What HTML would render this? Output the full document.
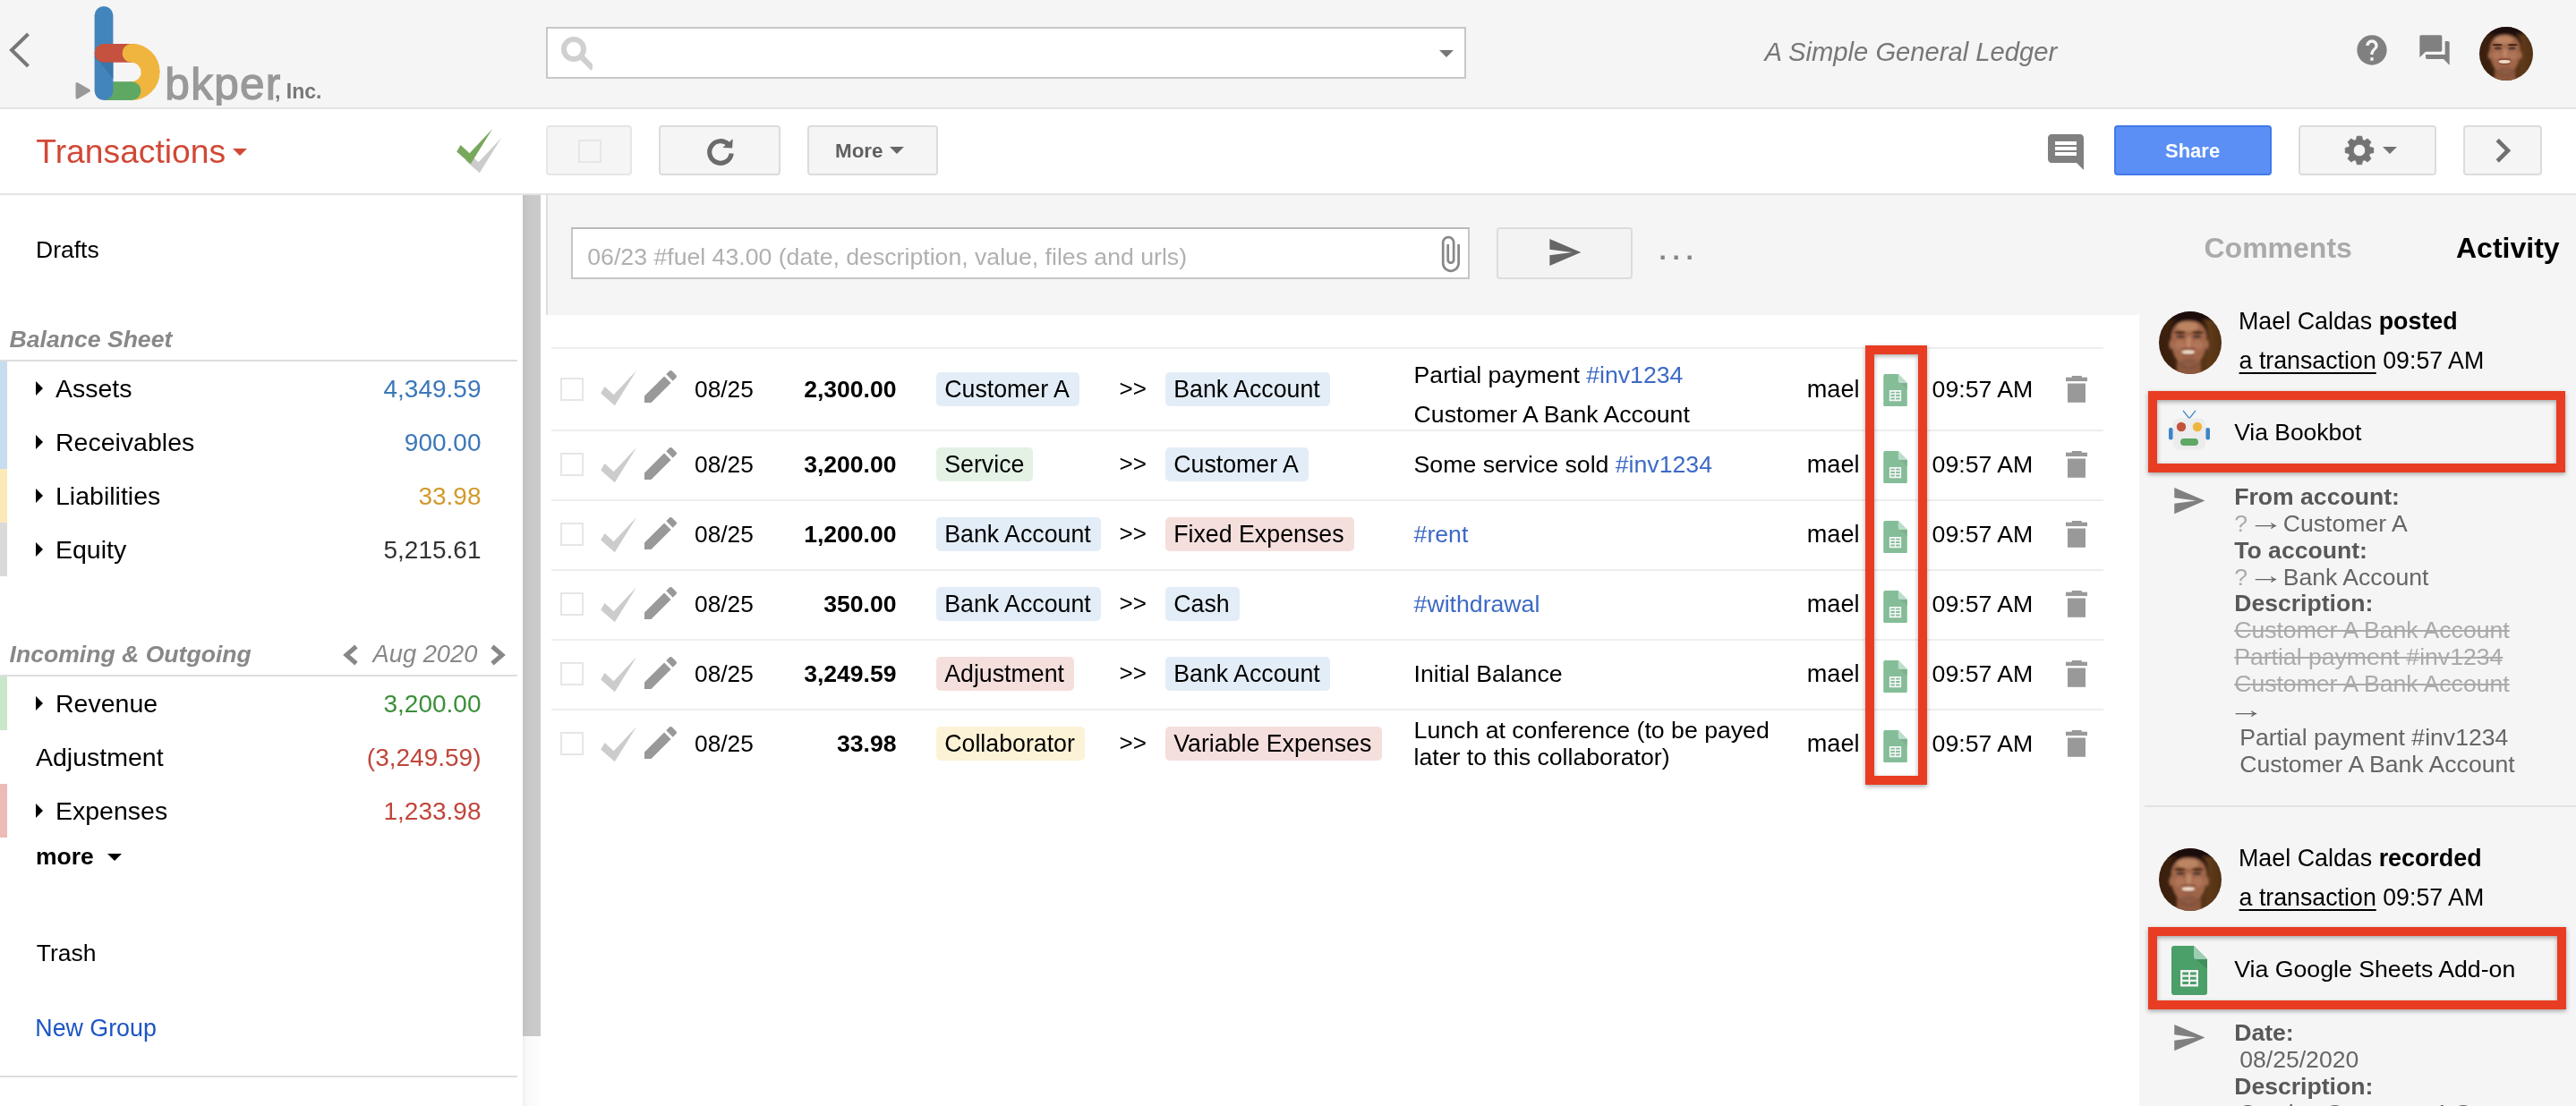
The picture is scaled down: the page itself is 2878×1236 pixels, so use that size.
<!DOCTYPE html>
<html lang="en"><head><meta charset="utf-8"><title>bkper - A Simple General Ledger</title>
<style>
html,body{margin:0;padding:0}
body{width:2878px;height:1236px;overflow:hidden;position:relative;background:#fff;color:#000;
font-family:"Liberation Sans",Arial,Helvetica,sans-serif;font-size:26px}
b{font-weight:700}
.abs{position:absolute}
.btn{position:absolute;box-sizing:border-box;border:2px solid #dcdcdc;border-radius:4px;background:#f5f5f5}
.badge{position:absolute;height:38px;border-radius:5px;font-size:26.75px;line-height:39px;padding:0 11.3px 0 9.2px;white-space:pre}
.tag{color:#3d69c6}
.rowline{position:absolute;left:616px;width:1734px;height:2px;background:#eeeeee}
.anno{position:absolute;box-sizing:border-box;border:10px solid #e83d22;filter:drop-shadow(0 2.5px 2.5px rgba(0,0,0,.33))}
.st{color:#aaa;text-decoration:line-through}
#app{position:absolute;left:0;top:0;width:2878px;height:1236px;overflow:hidden;will-change:transform}
</style></head><body><div id="app">

<div style="position:absolute;left:0px;top:0px;width:2878px;height:120px;background:#f5f5f5"></div>
<div style="position:absolute;left:0px;top:120px;width:2878px;height:2px;background:#e4e4e4"></div>
<div style="position:absolute;left:0px;top:216px;width:2878px;height:2px;background:#e4e4e4"></div>
<div style="position:absolute;left:610px;top:218px;width:2268px;height:1018px;background:#f5f5f5"></div>
<div style="position:absolute;left:610px;top:218px;width:2px;height:134px;background:#dedede"></div>
<div style="position:absolute;left:610px;top:352px;width:1780px;height:884px;background:#fff"></div>
<div style="position:absolute;left:584px;top:218px;width:20px;height:1018px;background:linear-gradient(90deg,#f1f1f1,#fafafa 30%,#fdfdfd)"></div>
<div style="position:absolute;left:584px;top:218px;width:20px;height:940px;background:linear-gradient(90deg,#c2c2c2,#c9c9c9 40%,#cbcbcb)"></div>
<div style="position:absolute;left:604px;top:218px;width:6px;height:1018px;background:#fff"></div>
<header>
<svg style="position:absolute;left:6px;top:30px;" width="36" height="52" viewBox="0 0 36 52"><polyline points="25.5,8 7,26 25.5,44" fill="none" stroke="#777" stroke-width="4"/></svg>
<svg style="position:absolute;left:0px;top:0px;" width="200" height="120" viewBox="0 0 200 120">
<path d="M147 59.4A21.1 21.1 0 0 1 147 101.6" stroke="#f0b53e" stroke-width="20.8" stroke-linecap="round" fill="none"/>
<path d="M116 101.6H147" stroke="#5ea864" stroke-width="20.8" stroke-linecap="butt" fill="none"/>
<circle cx="147" cy="101.6" r="10.4" fill="#5ea864"/>
<path d="M116 17.3V101.6" stroke="#4285bd" stroke-width="20.8" stroke-linecap="round" fill="none"/>
<path d="M105.6 62 126.4 88V66H106z" fill="#3a76aa"/>
<path d="M116 59.4H147" stroke="#c4523e" stroke-width="20.8" stroke-linecap="round" fill="none"/>
<path d="M147 59.4A21.1 21.1 0 0 1 168.1 80.5" stroke="#f0b53e" stroke-width="20.8" stroke-linecap="round" fill="none"/>
<path d="M86 93.5 99.5 101.3 86 109.1z" fill="#999" stroke="#999" stroke-width="3" stroke-linejoin="round"/>
</svg>
<div style="position:absolute;left:0;top:0;width:400px;height:117.6px;overflow:hidden"><div style="position:absolute;left:184.30px;top:63.75px;font-size:49.5px;line-height:59px;white-space:pre;color:#999;letter-spacing:1.3px;-webkit-text-stroke:1.3px #999">bkper</div></div>
<div style="position:absolute;left:307.00px;top:87.83px;font-size:23px;line-height:28px;white-space:pre;color:#777;font-weight:700">, Inc.</div>
<div style="position:absolute;left:610px;top:30px;width:1028px;height:58px;box-sizing:border-box;border:2px solid #c7c7c7;background:#fff"></div>
<svg style="position:absolute;left:624px;top:38px;" width="37.9" height="42" viewBox="0 0 37.9 42"><circle cx="17" cy="17" r="11" fill="none" stroke="#d0d0d0" stroke-width="6"/><path d="M25 25 38.5 38.5" stroke="#d0d0d0" stroke-width="6.5" stroke-linecap="butt"/></svg>
<svg style="position:absolute;left:1608px;top:56px;" width="16" height="8" viewBox="0 0 16 8"><path d="M0 0H16L8 8z" fill="#777"/></svg>
<div style="position:absolute;left:1971.60px;top:40.68px;font-size:29.2px;line-height:35px;white-space:pre;color:#777;font-style:italic">A Simple General Ledger</div>
<svg style="position:absolute;left:2630.0px;top:36.0px;" width="40" height="40" viewBox="0 0 24 24"><path fill="#808080" d="M12 2C6.48 2 2 6.48 2 12s4.48 10 10 10 10-4.48 10-10S17.52 2 12 2zm1 17h-2v-2h2v2zm2.07-7.75l-.9.92C13.45 12.9 13 13.5 13 15h-2v-.5c0-1.1.45-2.1 1.17-2.83l1.24-1.26c.37-.36.59-.86.59-1.41 0-1.1-.9-2-2-2s-2 .9-2 2H8c0-2.21 1.79-4 4-4s4 1.79 4 4c0 .88-.36 1.68-.93 2.25z"/></svg>
<svg style="position:absolute;left:2700.0px;top:35.5px;" width="40" height="40" viewBox="0 0 24 24"><path fill="#808080" d="M21 6h-2v9H6v2c0 .55.45 1 1 1h11l4 4V7c0-.55-.45-1-1-1zm-4 6V3c0-.55-.45-1-1-1H3c-.55 0-1 .45-1 1v14l4-4h10c.55 0 1-.45 1-1z"/></svg>
<svg style="position:absolute;left:2770px;top:30px;" width="60" height="60" viewBox="0 0 70 70"><defs><clipPath id="ca"><circle cx="35" cy="35" r="35"/></clipPath>
<filter id="ba" x="-30%" y="-30%" width="160%" height="160%"><feGaussianBlur stdDeviation="1.7"/></filter>
<filter id="sa" x="-30%" y="-30%" width="160%" height="160%"><feGaussianBlur stdDeviation="0.8"/></filter>
<linearGradient id="ga" x1="0" y1="0" x2="1" y2="0"><stop offset="0" stop-color="#3a1f0e"/><stop offset=".5" stop-color="#43250f"/><stop offset=".8" stop-color="#5e3a19"/><stop offset="1" stop-color="#523014"/></linearGradient></defs>
<g clip-path="url(#ca)"><rect width="70" height="70" fill="url(#ga)"/>
<g filter="url(#ba)">
<rect x="-5" y="-8" width="80" height="17" fill="#1c110a"/>
<ellipse cx="33.5" cy="80" rx="34" ry="14" fill="#96603f"/>
<rect x="20" y="52" width="27" height="22" fill="#8d583d"/>
<path d="M12.5 30C12.5 10 22 5 33.5 5C45 5 54.500 10 54.500 30C54.500 47 45 63 33.500 63C22 63 12.500 47 12.500 30Z" fill="#1a0f09"/>
<path d="M13.500 32C13.500 16 22 10.500 33.500 10.500C45 10.500 53.500 16 53.500 32C53.500 48 44.500 62.500 33.500 62.500C22.500 62.500 13.500 48 13.500 32Z" fill="#a1664a"/>
<ellipse cx="13.500" cy="37" rx="2" ry="5" fill="#a87152"/>
<ellipse cx="53.500" cy="37" rx="2" ry="5" fill="#a87152"/>
<ellipse cx="32" cy="17" rx="12" ry="5.500" fill="#bb8462"/>
<ellipse cx="23.500" cy="37.500" rx="6" ry="5.500" fill="#b1755a"/>
<ellipse cx="43.500" cy="37.500" rx="6" ry="5.500" fill="#b1755a"/>
<ellipse cx="33.500" cy="34.500" rx="3.200" ry="7" fill="#bf8666"/>
<ellipse cx="33.500" cy="56.500" rx="10" ry="4" fill="#8a5a42"/>
</g>
<g filter="url(#sa)">
<ellipse cx="24.300" cy="28" rx="4.600" ry="1.900" fill="#5d4136"/>
<ellipse cx="42.700" cy="28" rx="4.600" ry="1.900" fill="#5d4136"/>
<ellipse cx="23.500" cy="23.600" rx="6.500" ry="1.300" fill="#432719"/>
<ellipse cx="43.500" cy="23.600" rx="6.500" ry="1.300" fill="#432719"/>
<ellipse cx="32.800" cy="42.300" rx="9" ry="1.400" fill="#8b4f3c"/>
<ellipse cx="32.800" cy="48.300" rx="7" ry="1.200" fill="#8b4f3c"/>
<ellipse cx="32.800" cy="45.400" rx="7.400" ry="2.200" fill="#f0dfcc"/>
</g></g></svg>
</header>
<nav>
<div style="position:absolute;left:40.30px;top:147.39px;font-size:37.25px;line-height:45px;white-space:pre;color:#d14836">Transactions</div>
<svg style="position:absolute;left:260px;top:166px;" width="16" height="8" viewBox="0 0 16 8"><path d="M0 0H16L8 8z" fill="#d14836"/></svg>
<svg style="position:absolute;left:519.5px;top:154px;filter:blur(.4px)" width="41" height="40" viewBox="0 0 41 40"><polygon fill="#cccccc" points="0.2,25.4 4.6,18 14.6,27.2 40.2,0 15.8,39.3"/></svg>
<svg style="position:absolute;left:510px;top:144.2px;" width="41" height="40" viewBox="0 0 41 40"><polygon fill="#78a85c" points="0.2,25.4 4.6,18 14.6,27.2 40.2,0 15.8,39.3"/></svg>
<div class="btn" style="left:610px;top:140px;width:96px;height:56px;border-color:#e6e6e6"></div>
<div style="position:absolute;left:646px;top:156px;width:26px;height:26px;box-sizing:border-box;border:2px solid #e6e6e6;background:#f5f5f5"></div>
<div class="btn" style="left:736px;top:140px;width:136px;height:56px"></div>
<svg style="position:absolute;left:786.8px;top:151.8px;" width="36" height="36" viewBox="-18 -18 36 36"><path d="M12.21 1.50A12.3 12.3 0 1 1 8.85 -8.54" fill="none" stroke="#6b6b6b" stroke-width="5.2"/><path d="M2.3 -5 13.7 -14.8 13.1 -4.4z" fill="#6b6b6b"/></svg>
<div class="btn" style="left:902px;top:140px;width:146px;height:56px"></div>
<div style="position:absolute;left:933.00px;top:155.44px;font-size:22.4px;line-height:27px;white-space:pre;color:#606060;font-weight:700">More</div>
<svg style="position:absolute;left:994px;top:164px;" width="16" height="8" viewBox="0 0 16 8"><path d="M0 0H16L8 8z" fill="#666"/></svg>
<svg style="position:absolute;left:2284.0px;top:146.0px;" width="48" height="48" viewBox="0 0 24 24"><path fill="#808080" d="M21.99 4c0-1.1-.89-2-1.99-2H4c-1.1 0-2 .9-2 2v12c0 1.1.9 2 2 2h14l4 4-.01-18zM18 14H6v-2h12v2zm0-3H6V9h12v2zm0-3H6V6h12v2z"/></svg>
<div class="btn" style="left:2362px;top:140px;width:176px;height:56px;background:#5b8ff6;border-color:#4279e8;border-radius:4px"></div>
<div style="position:absolute;left:2419.00px;top:156.28px;font-size:22px;line-height:26px;white-space:pre;color:#fff;font-weight:700">Share</div>
<div class="btn" style="left:2568px;top:140px;width:154px;height:56px"></div>
<svg style="position:absolute;left:2618px;top:150px;" width="36" height="36" viewBox="-18 -18 36 36"><path fill="#737373" fill-rule="evenodd" stroke="#737373" stroke-width=".8" stroke-linejoin="round" d="M-3.50 -11.79L-2.70 -15.77L2.70 -15.77L3.50 -11.79A12.3 12.3 0 0 1 5.86 -10.81L9.24 -13.06L13.06 -9.24L10.81 -5.86A12.3 12.3 0 0 1 11.79 -3.50L15.77 -2.70L15.77 2.70L11.79 3.50A12.3 12.3 0 0 1 10.81 5.86L13.06 9.24L9.24 13.06L5.86 10.81A12.3 12.3 0 0 1 3.50 11.79L2.70 15.77L-2.70 15.77L-3.50 11.79A12.3 12.3 0 0 1 -5.86 10.81L-9.24 13.06L-13.06 9.24L-10.81 5.86A12.3 12.3 0 0 1 -11.79 3.50L-15.77 2.70L-15.77 -2.70L-11.79 -3.50A12.3 12.3 0 0 1 -10.81 -5.86L-13.06 -9.24L-9.24 -13.06L-5.86 -10.81A12.3 12.3 0 0 1 -3.50 -11.79ZM6.7 0A6.7 6.7 0 1 0 -6.7 0A6.7 6.7 0 1 0 6.7 0Z"/></svg>
<svg style="position:absolute;left:2662px;top:164px;" width="16" height="8" viewBox="0 0 16 8"><path d="M0 0H16L8 8z" fill="#737373"/></svg>
<div class="btn" style="left:2752px;top:140px;width:88px;height:56px"></div>
<svg style="position:absolute;left:2780px;top:150px;" width="36" height="36" viewBox="0 0 36 36"><polyline points="10.2,6.5 22,18.2 10.2,30" fill="none" stroke="#707070" stroke-width="4.6"/></svg>
</nav>
<aside>
<div style="position:absolute;left:40.00px;top:263.02px;font-size:26.5px;line-height:32px;white-space:pre;">Drafts</div>
<div style="position:absolute;left:10.50px;top:362.78px;font-size:26.6px;line-height:32px;white-space:pre;color:#888;font-weight:700;font-style:italic">Balance Sheet</div>
<div style="position:absolute;left:0px;top:402px;width:578px;height:2px;background:#dddddd"></div>
<div style="position:absolute;left:0px;top:404px;width:8px;height:60px;background:#c6dcef"></div>
<svg style="position:absolute;left:40px;top:426px;" width="8" height="16" viewBox="0 0 8 16"><path d="M0 0 8 8 0 16z" fill="#000"/></svg>
<div style="position:absolute;left:62.00px;top:417.42px;font-size:28.5px;line-height:34px;white-space:pre;">Assets</div>
<div style="position:absolute;right:2340.50px;top:417.60px;font-size:28px;line-height:34px;white-space:pre;text-align:right;color:#3b77b9">4,349.59</div>
<div style="position:absolute;left:0px;top:464px;width:8px;height:60px;background:#c6dcef"></div>
<svg style="position:absolute;left:40px;top:486px;" width="8" height="16" viewBox="0 0 8 16"><path d="M0 0 8 8 0 16z" fill="#000"/></svg>
<div style="position:absolute;left:62.00px;top:477.42px;font-size:28.5px;line-height:34px;white-space:pre;">Receivables</div>
<div style="position:absolute;right:2340.50px;top:477.60px;font-size:28px;line-height:34px;white-space:pre;text-align:right;color:#3b77b9">900.00</div>
<div style="position:absolute;left:0px;top:524px;width:8px;height:60px;background:#fbe9b8"></div>
<svg style="position:absolute;left:40px;top:546px;" width="8" height="16" viewBox="0 0 8 16"><path d="M0 0 8 8 0 16z" fill="#000"/></svg>
<div style="position:absolute;left:62.00px;top:537.42px;font-size:28.5px;line-height:34px;white-space:pre;">Liabilities</div>
<div style="position:absolute;right:2340.50px;top:537.60px;font-size:28px;line-height:34px;white-space:pre;text-align:right;color:#d29a2b">33.98</div>
<div style="position:absolute;left:0px;top:584px;width:8px;height:60px;background:#d9d9d9"></div>
<svg style="position:absolute;left:40px;top:606px;" width="8" height="16" viewBox="0 0 8 16"><path d="M0 0 8 8 0 16z" fill="#000"/></svg>
<div style="position:absolute;left:62.00px;top:597.42px;font-size:28.5px;line-height:34px;white-space:pre;">Equity</div>
<div style="position:absolute;right:2340.50px;top:597.60px;font-size:28px;line-height:34px;white-space:pre;text-align:right;color:#333">5,215.61</div>
<div style="position:absolute;left:0px;top:756px;width:8px;height:60px;background:#c9e6cb"></div>
<svg style="position:absolute;left:40px;top:778px;" width="8" height="16" viewBox="0 0 8 16"><path d="M0 0 8 8 0 16z" fill="#000"/></svg>
<div style="position:absolute;left:62.00px;top:769.42px;font-size:28.5px;line-height:34px;white-space:pre;">Revenue</div>
<div style="position:absolute;right:2340.50px;top:769.60px;font-size:28px;line-height:34px;white-space:pre;text-align:right;color:#3b8e3b">3,200.00</div>
<div style="position:absolute;left:40.00px;top:829.42px;font-size:28.5px;line-height:34px;white-space:pre;">Adjustment</div>
<div style="position:absolute;right:2340.50px;top:829.60px;font-size:28px;line-height:34px;white-space:pre;text-align:right;color:#c0463a">(3,249.59)</div>
<div style="position:absolute;left:0px;top:876px;width:8px;height:60px;background:#edbab6"></div>
<svg style="position:absolute;left:40px;top:898px;" width="8" height="16" viewBox="0 0 8 16"><path d="M0 0 8 8 0 16z" fill="#000"/></svg>
<div style="position:absolute;left:62.00px;top:889.42px;font-size:28.5px;line-height:34px;white-space:pre;">Expenses</div>
<div style="position:absolute;right:2340.50px;top:889.60px;font-size:28px;line-height:34px;white-space:pre;text-align:right;color:#c0463a">1,233.98</div>
<div style="position:absolute;left:10.50px;top:714.78px;font-size:26.6px;line-height:32px;white-space:pre;color:#888;font-weight:700;font-style:italic">Incoming &amp; Outgoing</div>
<svg style="position:absolute;left:382px;top:720px;" width="20" height="24" viewBox="0 0 20 24"><polyline points="16,2.5 5,12 16,21.5" fill="none" stroke="#888" stroke-width="5"/></svg>
<div style="position:absolute;left:416.50px;top:714.34px;font-size:27.3px;line-height:33px;white-space:pre;color:#888;font-style:italic">Aug 2020</div>
<svg style="position:absolute;left:546px;top:720px;" width="20" height="24" viewBox="0 0 20 24"><polyline points="4,2.5 15,12 4,21.5" fill="none" stroke="#888" stroke-width="5"/></svg>
<div style="position:absolute;left:0px;top:754px;width:578px;height:2px;background:#dddddd"></div>
<div style="position:absolute;left:40.00px;top:940.82px;font-size:26.5px;line-height:32px;white-space:pre;font-weight:700">more</div>
<svg style="position:absolute;left:120px;top:954px;" width="16" height="8" viewBox="0 0 16 8"><path d="M0 0H16L8 8z" fill="#000"/></svg>
<div style="position:absolute;left:40.80px;top:1048.92px;font-size:26.5px;line-height:32px;white-space:pre;">Trash</div>
<div style="position:absolute;left:39.30px;top:1132.81px;font-size:26.8px;line-height:32px;white-space:pre;color:#1b55c4">New Group</div>
<div style="position:absolute;left:0px;top:1202px;width:578px;height:2px;background:#dddddd"></div>
</aside>
<main>
<div style="position:absolute;left:638px;top:254px;width:1004px;height:58px;box-sizing:border-box;border:2px solid #c6c6c6;border-top-color:#b9b9b9;background:#fff"></div>
<div style="position:absolute;left:656.30px;top:270.76px;font-size:26.67px;line-height:32px;white-space:pre;color:#b0b0b0">06/23 #fuel 43.00 (date, description, value, files and urls)</div>
<svg style="position:absolute;left:1597.8px;top:262.0px;" width="44" height="44" viewBox="0 0 24 24"><path fill="#888" d="M16.5 6v11.5c0 2.21-1.79 4-4 4s-4-1.79-4-4V5c0-1.38 1.12-2.5 2.5-2.5s2.5 1.12 2.5 2.5v10.5c0 .55-.45 1-1 1s-1-.45-1-1V6H10v9.5c0 1.38 1.12 2.5 2.5 2.5s2.5-1.12 2.5-2.5V5c0-2.21-1.79-4-4-4S7 2.79 7 5v12.5c0 3.04 2.46 5.5 5.5 5.5s5.5-2.46 5.5-5.5V6h-1.5z"/></svg>
<div class="btn" style="left:1672px;top:254px;width:152px;height:58px;background:#f3f3f3"></div>
<svg style="position:absolute;left:1728.3px;top:262.0px;" width="40" height="40" viewBox="0 0 24 24"><path fill="#666" d="M2.01 21L23 12 2.01 3 2 10l15 2-15 2z"/></svg>
<div style="position:absolute;left:1853.50px;top:262.41px;font-size:30px;line-height:36px;white-space:pre;color:#858585;font-weight:700;letter-spacing:6.65px">...</div>
<div class="rowline" style="top:388px"></div>
<div style="position:absolute;left:626px;top:421.75px;width:26px;height:26px;box-sizing:border-box;border:2px solid #e6e6e6;background:#fff"></div>
<svg style="position:absolute;left:670.5px;top:414.0px;" width="41" height="40" viewBox="0 0 41 40"><polygon fill="#cccccc" points="0.2,25.4 4.6,18 14.6,27.2 40.2,0 15.8,39.3"/></svg>
<svg style="position:absolute;left:714.0px;top:408.0px;" width="48" height="48" viewBox="0 0 24 24"><path fill="#999" d="M3 17.25V21h3.75L17.81 9.94l-3.75-3.75L3 17.25zM20.71 7.04c.39-.39.39-1.02 0-1.41l-2.34-2.34c-.39-.39-1.02-.39-1.41 0l-1.83 1.83 3.75 3.75 1.83-1.83z"/></svg>
<div style="position:absolute;left:776.00px;top:418.74px;font-size:26.3px;line-height:32px;white-space:pre;">08/25</div>
<div style="position:absolute;right:1876.50px;top:418.65px;font-size:26.55px;line-height:32px;white-space:pre;text-align:right;font-weight:700">2,300.00</div>
<div class="badge" style="left:1046px;top:416.0px;background:#e3edf7">Customer A</div>
<div style="position:absolute;left:1250.50px;top:419.34px;font-size:26px;line-height:31px;white-space:pre;">&gt;&gt;</div>
<div class="badge" style="left:1302px;top:416.0px;background:#e3edf7">Bank Account</div>
<div style="position:absolute;left:1579.60px;top:403.06px;font-size:26.67px;line-height:32px;white-space:pre;">Partial payment <span class="tag">#inv1234</span></div>
<div style="position:absolute;left:1579.60px;top:447.06px;font-size:26.67px;line-height:32px;white-space:pre;">Customer A Bank Account</div>
<div style="position:absolute;left:2018.80px;top:417.96px;font-size:27.1px;line-height:33px;white-space:pre;">mael</div>
<svg style="position:absolute;left:2104.2px;top:417.5px;opacity:.68" width="27" height="36.5" viewBox="0 0 40 55"><defs><linearGradient id="sg" x1="0" y1="0" x2="1" y2="1"><stop offset="0" stop-color="#52a46e"/><stop offset="1" stop-color="#449a62"/></linearGradient></defs><path fill="#4b9f68" d="M3 0H25L40 15V52a3 3 0 0 1-3 3H3a3 3 0 0 1-3-3V3a3 3 0 0 1 3-3z"/><path fill="#3d8857" opacity=".75" d="M26.5 14 40 26V15z"/><path fill="#9bceb1" d="M25 0 40 15H28a3 3 0 0 1-3-3z"/><path fill="#f3f3f3" fill-rule="evenodd" d="M10 27h20v18.6H10zM12.3 29.6v2.9h6.7v-2.9zM21 29.6v2.9h6.7v-2.9zM12.3 34.8v2.9h6.7v-2.9zM21 34.8v2.9h6.7v-2.9zM12.3 40v2.9h6.7v-2.9zM21 40v2.9h6.7v-2.9z"/></svg>
<div style="position:absolute;left:2158.60px;top:418.60px;font-size:26.7px;line-height:32px;white-space:pre;">09:57 AM</div>
<svg style="position:absolute;left:2308px;top:419.85px;" width="24.5" height="30" viewBox="0 0 24.5 30"><rect x="6.8" y="0" width="10.9" height="3" fill="#999"/><rect x="0" y="1.7" width="24" height="4.4" fill="#999"/><rect x="2" y="8.5" width="20" height="21.3" fill="#999"/></svg>
<div class="rowline" style="top:480px"></div>
<div style="position:absolute;left:626px;top:505.75px;width:26px;height:26px;box-sizing:border-box;border:2px solid #e6e6e6;background:#fff"></div>
<svg style="position:absolute;left:670.5px;top:500.0px;" width="41" height="40" viewBox="0 0 41 40"><polygon fill="#cccccc" points="0.2,25.4 4.6,18 14.6,27.2 40.2,0 15.8,39.3"/></svg>
<svg style="position:absolute;left:714.0px;top:494.0px;" width="48" height="48" viewBox="0 0 24 24"><path fill="#999" d="M3 17.25V21h3.75L17.81 9.94l-3.75-3.75L3 17.25zM20.71 7.04c.39-.39.39-1.02 0-1.41l-2.34-2.34c-.39-.39-1.02-.39-1.41 0l-1.83 1.83 3.75 3.75 1.83-1.83z"/></svg>
<div style="position:absolute;left:776.00px;top:502.74px;font-size:26.3px;line-height:32px;white-space:pre;">08/25</div>
<div style="position:absolute;right:1876.50px;top:502.65px;font-size:26.55px;line-height:32px;white-space:pre;text-align:right;font-weight:700">3,200.00</div>
<div class="badge" style="left:1046px;top:500.0px;background:#e3f2e5;padding-right:9.4px">Service</div>
<div style="position:absolute;left:1250.50px;top:503.34px;font-size:26px;line-height:31px;white-space:pre;">&gt;&gt;</div>
<div class="badge" style="left:1302px;top:500.0px;background:#e3edf7">Customer A</div>
<div style="position:absolute;left:1579.60px;top:502.61px;font-size:26.67px;line-height:32px;white-space:pre;">Some service sold <span class="tag">#inv1234</span></div>
<div style="position:absolute;left:2018.80px;top:501.96px;font-size:27.1px;line-height:33px;white-space:pre;">mael</div>
<svg style="position:absolute;left:2104.2px;top:503.7px;opacity:.68" width="27" height="36.5" viewBox="0 0 40 55"><defs><linearGradient id="sg" x1="0" y1="0" x2="1" y2="1"><stop offset="0" stop-color="#52a46e"/><stop offset="1" stop-color="#449a62"/></linearGradient></defs><path fill="#4b9f68" d="M3 0H25L40 15V52a3 3 0 0 1-3 3H3a3 3 0 0 1-3-3V3a3 3 0 0 1 3-3z"/><path fill="#3d8857" opacity=".75" d="M26.5 14 40 26V15z"/><path fill="#9bceb1" d="M25 0 40 15H28a3 3 0 0 1-3-3z"/><path fill="#f3f3f3" fill-rule="evenodd" d="M10 27h20v18.6H10zM12.3 29.6v2.9h6.7v-2.9zM21 29.6v2.9h6.7v-2.9zM12.3 34.8v2.9h6.7v-2.9zM21 34.8v2.9h6.7v-2.9zM12.3 40v2.9h6.7v-2.9zM21 40v2.9h6.7v-2.9z"/></svg>
<div style="position:absolute;left:2158.60px;top:502.60px;font-size:26.7px;line-height:32px;white-space:pre;">09:57 AM</div>
<svg style="position:absolute;left:2308px;top:503.85px;" width="24.5" height="30" viewBox="0 0 24.5 30"><rect x="6.8" y="0" width="10.9" height="3" fill="#999"/><rect x="0" y="1.7" width="24" height="4.4" fill="#999"/><rect x="2" y="8.5" width="20" height="21.3" fill="#999"/></svg>
<div class="rowline" style="top:558px"></div>
<div style="position:absolute;left:626px;top:583.75px;width:26px;height:26px;box-sizing:border-box;border:2px solid #e6e6e6;background:#fff"></div>
<svg style="position:absolute;left:670.5px;top:578.0px;" width="41" height="40" viewBox="0 0 41 40"><polygon fill="#cccccc" points="0.2,25.4 4.6,18 14.6,27.2 40.2,0 15.8,39.3"/></svg>
<svg style="position:absolute;left:714.0px;top:572.0px;" width="48" height="48" viewBox="0 0 24 24"><path fill="#999" d="M3 17.25V21h3.75L17.81 9.94l-3.75-3.75L3 17.25zM20.71 7.04c.39-.39.39-1.02 0-1.41l-2.34-2.34c-.39-.39-1.02-.39-1.41 0l-1.83 1.83 3.75 3.75 1.83-1.83z"/></svg>
<div style="position:absolute;left:776.00px;top:580.74px;font-size:26.3px;line-height:32px;white-space:pre;">08/25</div>
<div style="position:absolute;right:1876.50px;top:580.65px;font-size:26.55px;line-height:32px;white-space:pre;text-align:right;font-weight:700">1,200.00</div>
<div class="badge" style="left:1046px;top:578.0px;background:#e3edf7">Bank Account</div>
<div style="position:absolute;left:1250.50px;top:581.34px;font-size:26px;line-height:31px;white-space:pre;">&gt;&gt;</div>
<div class="badge" style="left:1302px;top:578.0px;background:#f5dfdd">Fixed Expenses</div>
<div style="position:absolute;left:1579.60px;top:580.61px;font-size:26.67px;line-height:32px;white-space:pre;"><span class="tag">#rent</span></div>
<div style="position:absolute;left:2018.80px;top:579.96px;font-size:27.1px;line-height:33px;white-space:pre;">mael</div>
<svg style="position:absolute;left:2104.2px;top:581.7px;opacity:.68" width="27" height="36.5" viewBox="0 0 40 55"><defs><linearGradient id="sg" x1="0" y1="0" x2="1" y2="1"><stop offset="0" stop-color="#52a46e"/><stop offset="1" stop-color="#449a62"/></linearGradient></defs><path fill="#4b9f68" d="M3 0H25L40 15V52a3 3 0 0 1-3 3H3a3 3 0 0 1-3-3V3a3 3 0 0 1 3-3z"/><path fill="#3d8857" opacity=".75" d="M26.5 14 40 26V15z"/><path fill="#9bceb1" d="M25 0 40 15H28a3 3 0 0 1-3-3z"/><path fill="#f3f3f3" fill-rule="evenodd" d="M10 27h20v18.6H10zM12.3 29.6v2.9h6.7v-2.9zM21 29.6v2.9h6.7v-2.9zM12.3 34.8v2.9h6.7v-2.9zM21 34.8v2.9h6.7v-2.9zM12.3 40v2.9h6.7v-2.9zM21 40v2.9h6.7v-2.9z"/></svg>
<div style="position:absolute;left:2158.60px;top:580.60px;font-size:26.7px;line-height:32px;white-space:pre;">09:57 AM</div>
<svg style="position:absolute;left:2308px;top:581.85px;" width="24.5" height="30" viewBox="0 0 24.5 30"><rect x="6.8" y="0" width="10.9" height="3" fill="#999"/><rect x="0" y="1.7" width="24" height="4.4" fill="#999"/><rect x="2" y="8.5" width="20" height="21.3" fill="#999"/></svg>
<div class="rowline" style="top:636px"></div>
<div style="position:absolute;left:626px;top:661.75px;width:26px;height:26px;box-sizing:border-box;border:2px solid #e6e6e6;background:#fff"></div>
<svg style="position:absolute;left:670.5px;top:656.0px;" width="41" height="40" viewBox="0 0 41 40"><polygon fill="#cccccc" points="0.2,25.4 4.6,18 14.6,27.2 40.2,0 15.8,39.3"/></svg>
<svg style="position:absolute;left:714.0px;top:650.0px;" width="48" height="48" viewBox="0 0 24 24"><path fill="#999" d="M3 17.25V21h3.75L17.81 9.94l-3.75-3.75L3 17.25zM20.71 7.04c.39-.39.39-1.02 0-1.41l-2.34-2.34c-.39-.39-1.02-.39-1.41 0l-1.83 1.83 3.75 3.75 1.83-1.83z"/></svg>
<div style="position:absolute;left:776.00px;top:658.74px;font-size:26.3px;line-height:32px;white-space:pre;">08/25</div>
<div style="position:absolute;right:1876.50px;top:658.65px;font-size:26.55px;line-height:32px;white-space:pre;text-align:right;font-weight:700">350.00</div>
<div class="badge" style="left:1046px;top:656.0px;background:#e3edf7">Bank Account</div>
<div style="position:absolute;left:1250.50px;top:659.34px;font-size:26px;line-height:31px;white-space:pre;">&gt;&gt;</div>
<div class="badge" style="left:1302px;top:656.0px;background:#e3edf7">Cash</div>
<div style="position:absolute;left:1579.60px;top:658.61px;font-size:26.67px;line-height:32px;white-space:pre;"><span class="tag">#withdrawal</span></div>
<div style="position:absolute;left:2018.80px;top:657.96px;font-size:27.1px;line-height:33px;white-space:pre;">mael</div>
<svg style="position:absolute;left:2104.2px;top:659.7px;opacity:.68" width="27" height="36.5" viewBox="0 0 40 55"><defs><linearGradient id="sg" x1="0" y1="0" x2="1" y2="1"><stop offset="0" stop-color="#52a46e"/><stop offset="1" stop-color="#449a62"/></linearGradient></defs><path fill="#4b9f68" d="M3 0H25L40 15V52a3 3 0 0 1-3 3H3a3 3 0 0 1-3-3V3a3 3 0 0 1 3-3z"/><path fill="#3d8857" opacity=".75" d="M26.5 14 40 26V15z"/><path fill="#9bceb1" d="M25 0 40 15H28a3 3 0 0 1-3-3z"/><path fill="#f3f3f3" fill-rule="evenodd" d="M10 27h20v18.6H10zM12.3 29.6v2.9h6.7v-2.9zM21 29.6v2.9h6.7v-2.9zM12.3 34.8v2.9h6.7v-2.9zM21 34.8v2.9h6.7v-2.9zM12.3 40v2.9h6.7v-2.9zM21 40v2.9h6.7v-2.9z"/></svg>
<div style="position:absolute;left:2158.60px;top:658.60px;font-size:26.7px;line-height:32px;white-space:pre;">09:57 AM</div>
<svg style="position:absolute;left:2308px;top:659.85px;" width="24.5" height="30" viewBox="0 0 24.5 30"><rect x="6.8" y="0" width="10.9" height="3" fill="#999"/><rect x="0" y="1.7" width="24" height="4.4" fill="#999"/><rect x="2" y="8.5" width="20" height="21.3" fill="#999"/></svg>
<div class="rowline" style="top:714px"></div>
<div style="position:absolute;left:626px;top:739.75px;width:26px;height:26px;box-sizing:border-box;border:2px solid #e6e6e6;background:#fff"></div>
<svg style="position:absolute;left:670.5px;top:734.0px;" width="41" height="40" viewBox="0 0 41 40"><polygon fill="#cccccc" points="0.2,25.4 4.6,18 14.6,27.2 40.2,0 15.8,39.3"/></svg>
<svg style="position:absolute;left:714.0px;top:728.0px;" width="48" height="48" viewBox="0 0 24 24"><path fill="#999" d="M3 17.25V21h3.75L17.81 9.94l-3.75-3.75L3 17.25zM20.71 7.04c.39-.39.39-1.02 0-1.41l-2.34-2.34c-.39-.39-1.02-.39-1.41 0l-1.83 1.83 3.75 3.75 1.83-1.83z"/></svg>
<div style="position:absolute;left:776.00px;top:736.74px;font-size:26.3px;line-height:32px;white-space:pre;">08/25</div>
<div style="position:absolute;right:1876.50px;top:736.65px;font-size:26.55px;line-height:32px;white-space:pre;text-align:right;font-weight:700">3,249.59</div>
<div class="badge" style="left:1046px;top:734.0px;background:#f5dfdd">Adjustment</div>
<div style="position:absolute;left:1250.50px;top:737.34px;font-size:26px;line-height:31px;white-space:pre;">&gt;&gt;</div>
<div class="badge" style="left:1302px;top:734.0px;background:#e3edf7">Bank Account</div>
<div style="position:absolute;left:1579.60px;top:736.61px;font-size:26.67px;line-height:32px;white-space:pre;">Initial Balance</div>
<div style="position:absolute;left:2018.80px;top:735.96px;font-size:27.1px;line-height:33px;white-space:pre;">mael</div>
<svg style="position:absolute;left:2104.2px;top:737.7px;opacity:.68" width="27" height="36.5" viewBox="0 0 40 55"><defs><linearGradient id="sg" x1="0" y1="0" x2="1" y2="1"><stop offset="0" stop-color="#52a46e"/><stop offset="1" stop-color="#449a62"/></linearGradient></defs><path fill="#4b9f68" d="M3 0H25L40 15V52a3 3 0 0 1-3 3H3a3 3 0 0 1-3-3V3a3 3 0 0 1 3-3z"/><path fill="#3d8857" opacity=".75" d="M26.5 14 40 26V15z"/><path fill="#9bceb1" d="M25 0 40 15H28a3 3 0 0 1-3-3z"/><path fill="#f3f3f3" fill-rule="evenodd" d="M10 27h20v18.6H10zM12.3 29.6v2.9h6.7v-2.9zM21 29.6v2.9h6.7v-2.9zM12.3 34.8v2.9h6.7v-2.9zM21 34.8v2.9h6.7v-2.9zM12.3 40v2.9h6.7v-2.9zM21 40v2.9h6.7v-2.9z"/></svg>
<div style="position:absolute;left:2158.60px;top:736.60px;font-size:26.7px;line-height:32px;white-space:pre;">09:57 AM</div>
<svg style="position:absolute;left:2308px;top:737.85px;" width="24.5" height="30" viewBox="0 0 24.5 30"><rect x="6.8" y="0" width="10.9" height="3" fill="#999"/><rect x="0" y="1.7" width="24" height="4.4" fill="#999"/><rect x="2" y="8.5" width="20" height="21.3" fill="#999"/></svg>
<div class="rowline" style="top:792px"></div>
<div style="position:absolute;left:626px;top:817.75px;width:26px;height:26px;box-sizing:border-box;border:2px solid #e6e6e6;background:#fff"></div>
<svg style="position:absolute;left:670.5px;top:812.0px;" width="41" height="40" viewBox="0 0 41 40"><polygon fill="#cccccc" points="0.2,25.4 4.6,18 14.6,27.2 40.2,0 15.8,39.3"/></svg>
<svg style="position:absolute;left:714.0px;top:806.0px;" width="48" height="48" viewBox="0 0 24 24"><path fill="#999" d="M3 17.25V21h3.75L17.81 9.94l-3.75-3.75L3 17.25zM20.71 7.04c.39-.39.39-1.02 0-1.41l-2.34-2.34c-.39-.39-1.02-.39-1.41 0l-1.83 1.83 3.75 3.75 1.83-1.83z"/></svg>
<div style="position:absolute;left:776.00px;top:814.74px;font-size:26.3px;line-height:32px;white-space:pre;">08/25</div>
<div style="position:absolute;right:1876.50px;top:814.65px;font-size:26.55px;line-height:32px;white-space:pre;text-align:right;font-weight:700">33.98</div>
<div class="badge" style="left:1046px;top:812.0px;background:#fcf2d6">Collaborator</div>
<div style="position:absolute;left:1250.50px;top:815.34px;font-size:26px;line-height:31px;white-space:pre;">&gt;&gt;</div>
<div class="badge" style="left:1302px;top:812.0px;background:#f5dfdd">Variable Expenses</div>
<div style="position:absolute;left:1579.60px;top:800.21px;font-size:26.67px;line-height:32px;white-space:pre;">Lunch at conference (to be payed</div>
<div style="position:absolute;left:1579.60px;top:830.21px;font-size:26.67px;line-height:32px;white-space:pre;">later to this collaborator)</div>
<div style="position:absolute;left:2018.80px;top:813.96px;font-size:27.1px;line-height:33px;white-space:pre;">mael</div>
<svg style="position:absolute;left:2104.2px;top:815.7px;opacity:.68" width="27" height="36.5" viewBox="0 0 40 55"><defs><linearGradient id="sg" x1="0" y1="0" x2="1" y2="1"><stop offset="0" stop-color="#52a46e"/><stop offset="1" stop-color="#449a62"/></linearGradient></defs><path fill="#4b9f68" d="M3 0H25L40 15V52a3 3 0 0 1-3 3H3a3 3 0 0 1-3-3V3a3 3 0 0 1 3-3z"/><path fill="#3d8857" opacity=".75" d="M26.5 14 40 26V15z"/><path fill="#9bceb1" d="M25 0 40 15H28a3 3 0 0 1-3-3z"/><path fill="#f3f3f3" fill-rule="evenodd" d="M10 27h20v18.6H10zM12.3 29.6v2.9h6.7v-2.9zM21 29.6v2.9h6.7v-2.9zM12.3 34.8v2.9h6.7v-2.9zM21 34.8v2.9h6.7v-2.9zM12.3 40v2.9h6.7v-2.9zM21 40v2.9h6.7v-2.9z"/></svg>
<div style="position:absolute;left:2158.60px;top:814.60px;font-size:26.7px;line-height:32px;white-space:pre;">09:57 AM</div>
<svg style="position:absolute;left:2308px;top:815.85px;" width="24.5" height="30" viewBox="0 0 24.5 30"><rect x="6.8" y="0" width="10.9" height="3" fill="#999"/><rect x="0" y="1.7" width="24" height="4.4" fill="#999"/><rect x="2" y="8.5" width="20" height="21.3" fill="#999"/></svg>
<div class="anno" style="left:2084px;top:386px;width:69px;height:491px"></div>
</main>
<section>
<div style="position:absolute;left:2462.50px;top:257.91px;font-size:32px;line-height:38px;white-space:pre;color:#aaa;font-weight:700">Comments</div>
<div style="position:absolute;left:2744.00px;top:257.91px;font-size:32px;line-height:38px;white-space:pre;font-weight:700">Activity</div>
<svg style="position:absolute;left:2412px;top:348px;" width="70" height="70" viewBox="0 0 70 70"><defs><clipPath id="cb"><circle cx="35" cy="35" r="35"/></clipPath>
<filter id="bb" x="-30%" y="-30%" width="160%" height="160%"><feGaussianBlur stdDeviation="1.7"/></filter>
<filter id="sb" x="-30%" y="-30%" width="160%" height="160%"><feGaussianBlur stdDeviation="0.8"/></filter>
<linearGradient id="gb" x1="0" y1="0" x2="1" y2="0"><stop offset="0" stop-color="#3a1f0e"/><stop offset=".5" stop-color="#43250f"/><stop offset=".8" stop-color="#5e3a19"/><stop offset="1" stop-color="#523014"/></linearGradient></defs>
<g clip-path="url(#cb)"><rect width="70" height="70" fill="url(#gb)"/>
<g filter="url(#bb)">
<rect x="-5" y="-8" width="80" height="17" fill="#1c110a"/>
<ellipse cx="33.5" cy="80" rx="34" ry="14" fill="#96603f"/>
<rect x="20" y="52" width="27" height="22" fill="#8d583d"/>
<path d="M12.5 30C12.5 10 22 5 33.5 5C45 5 54.500 10 54.500 30C54.500 47 45 63 33.500 63C22 63 12.500 47 12.500 30Z" fill="#1a0f09"/>
<path d="M13.500 32C13.500 16 22 10.500 33.500 10.500C45 10.500 53.500 16 53.500 32C53.500 48 44.500 62.500 33.500 62.500C22.500 62.500 13.500 48 13.500 32Z" fill="#a1664a"/>
<ellipse cx="13.500" cy="37" rx="2" ry="5" fill="#a87152"/>
<ellipse cx="53.500" cy="37" rx="2" ry="5" fill="#a87152"/>
<ellipse cx="32" cy="17" rx="12" ry="5.500" fill="#bb8462"/>
<ellipse cx="23.500" cy="37.500" rx="6" ry="5.500" fill="#b1755a"/>
<ellipse cx="43.500" cy="37.500" rx="6" ry="5.500" fill="#b1755a"/>
<ellipse cx="33.500" cy="34.500" rx="3.200" ry="7" fill="#bf8666"/>
<ellipse cx="33.500" cy="56.500" rx="10" ry="4" fill="#8a5a42"/>
</g>
<g filter="url(#sb)">
<ellipse cx="24.300" cy="28" rx="4.600" ry="1.900" fill="#5d4136"/>
<ellipse cx="42.700" cy="28" rx="4.600" ry="1.900" fill="#5d4136"/>
<ellipse cx="23.500" cy="23.600" rx="6.500" ry="1.300" fill="#432719"/>
<ellipse cx="43.500" cy="23.600" rx="6.500" ry="1.300" fill="#432719"/>
<ellipse cx="32.800" cy="42.300" rx="9" ry="1.400" fill="#8b4f3c"/>
<ellipse cx="32.800" cy="48.300" rx="7" ry="1.200" fill="#8b4f3c"/>
<ellipse cx="32.800" cy="45.400" rx="7.400" ry="2.200" fill="#f0dfcc"/>
</g></g></svg>
<div style="position:absolute;left:2501.00px;top:342.90px;font-size:26.85px;line-height:32px;white-space:pre;">Mael Caldas <b>posted</b></div>
<div style="position:absolute;left:2501.60px;top:386.93px;font-size:26.75px;line-height:32px;white-space:pre;"><span style="text-decoration:underline;text-decoration-thickness:1.6px;text-underline-offset:3.6px">a transaction</span> 09:57 AM</div>
<div class="anno" style="left:2400px;top:437px;width:466px;height:91px"></div>
<svg style="position:absolute;left:2423px;top:458px;" width="46" height="45" viewBox="0 0 46 45">
<path d="M16 .8 23 9.6 30 .8" fill="none" stroke="#3d85c6" stroke-width="1.3"/>
<rect x="5" y="9.5" width="36" height="35" rx="7" fill="#ececec"/>
<rect x="0" y="20" width="4.6" height="13.5" rx="2" fill="#3d85c6"/>
<rect x="41.4" y="20" width="4.6" height="13.5" rx="2" fill="#3d85c6"/>
<circle cx="14" cy="19" r="5.2" fill="#c4523e"/>
<circle cx="32" cy="19" r="5.2" fill="#f0b53e"/>
<rect x="13" y="32" width="20" height="8" rx="4" fill="#5ea864"/>
</svg>
<div style="position:absolute;left:2496.20px;top:466.84px;font-size:26.45px;line-height:32px;white-space:pre;">Via Bookbot</div>
<svg style="position:absolute;left:2425.9px;top:539.9px;" width="39" height="39" viewBox="0 0 24 24"><path fill="#808080" d="M2.01 21L23 12 2.01 3 2 10l15 2-15 2z"/></svg>
<div style="position:absolute;left:2496.20px;top:538.68px;font-size:26.6px;line-height:32px;white-space:pre;color:#666"><b style="color:#585858">From account:</b></div>
<div style="position:absolute;left:2496.20px;top:568.63px;font-size:26.6px;line-height:32px;white-space:pre;color:#666"><span style="color:#aaa">?</span> <span style="display:inline-block;width:25px;text-align:center;position:relative;top:-1.5px;transform:scaleX(1.5)">→</span> Customer A</div>
<div style="position:absolute;left:2496.20px;top:598.58px;font-size:26.6px;line-height:32px;white-space:pre;color:#666"><b style="color:#585858">To account:</b></div>
<div style="position:absolute;left:2496.20px;top:628.53px;font-size:26.6px;line-height:32px;white-space:pre;color:#666"><span style="color:#aaa">?</span> <span style="display:inline-block;width:25px;text-align:center;position:relative;top:-1.5px;transform:scaleX(1.5)">→</span> Bank Account</div>
<div style="position:absolute;left:2496.20px;top:658.48px;font-size:26.6px;line-height:32px;white-space:pre;color:#666"><b style="color:#585858">Description:</b></div>
<div style="position:absolute;left:2496.20px;top:688.43px;font-size:26.6px;line-height:32px;white-space:pre;color:#666"><span class="st">Customer A Bank Account</span></div>
<div style="position:absolute;left:2496.20px;top:718.38px;font-size:26.6px;line-height:32px;white-space:pre;color:#666"><span class="st">Partial payment #inv1234</span></div>
<div style="position:absolute;left:2496.20px;top:748.33px;font-size:26.6px;line-height:32px;white-space:pre;color:#666"><span class="st">Customer A Bank Account</span></div>
<div style="position:absolute;left:2496.20px;top:778.28px;font-size:26.6px;line-height:32px;white-space:pre;color:#666"><span style="display:inline-block;width:25px;text-align:center;position:relative;top:-1.5px;transform:scaleX(1.5)">→</span></div>
<div style="position:absolute;left:2494.80px;top:808.23px;font-size:26.6px;line-height:32px;white-space:pre;color:#666"> Partial payment #inv1234</div>
<div style="position:absolute;left:2494.80px;top:838.18px;font-size:26.6px;line-height:32px;white-space:pre;color:#666"> Customer A Bank Account</div>
<div style="position:absolute;left:2396px;top:900px;width:482px;height:2px;background:#e2e2e2"></div>
<svg style="position:absolute;left:2412px;top:948px;" width="70" height="70" viewBox="0 0 70 70"><defs><clipPath id="cc"><circle cx="35" cy="35" r="35"/></clipPath>
<filter id="bc" x="-30%" y="-30%" width="160%" height="160%"><feGaussianBlur stdDeviation="1.7"/></filter>
<filter id="sc" x="-30%" y="-30%" width="160%" height="160%"><feGaussianBlur stdDeviation="0.8"/></filter>
<linearGradient id="gc" x1="0" y1="0" x2="1" y2="0"><stop offset="0" stop-color="#3a1f0e"/><stop offset=".5" stop-color="#43250f"/><stop offset=".8" stop-color="#5e3a19"/><stop offset="1" stop-color="#523014"/></linearGradient></defs>
<g clip-path="url(#cc)"><rect width="70" height="70" fill="url(#gc)"/>
<g filter="url(#bc)">
<rect x="-5" y="-8" width="80" height="17" fill="#1c110a"/>
<ellipse cx="33.5" cy="80" rx="34" ry="14" fill="#96603f"/>
<rect x="20" y="52" width="27" height="22" fill="#8d583d"/>
<path d="M12.5 30C12.5 10 22 5 33.5 5C45 5 54.500 10 54.500 30C54.500 47 45 63 33.500 63C22 63 12.500 47 12.500 30Z" fill="#1a0f09"/>
<path d="M13.500 32C13.500 16 22 10.500 33.500 10.500C45 10.500 53.500 16 53.500 32C53.500 48 44.500 62.500 33.500 62.500C22.500 62.500 13.500 48 13.500 32Z" fill="#a1664a"/>
<ellipse cx="13.500" cy="37" rx="2" ry="5" fill="#a87152"/>
<ellipse cx="53.500" cy="37" rx="2" ry="5" fill="#a87152"/>
<ellipse cx="32" cy="17" rx="12" ry="5.500" fill="#bb8462"/>
<ellipse cx="23.500" cy="37.500" rx="6" ry="5.500" fill="#b1755a"/>
<ellipse cx="43.500" cy="37.500" rx="6" ry="5.500" fill="#b1755a"/>
<ellipse cx="33.500" cy="34.500" rx="3.200" ry="7" fill="#bf8666"/>
<ellipse cx="33.500" cy="56.500" rx="10" ry="4" fill="#8a5a42"/>
</g>
<g filter="url(#sc)">
<ellipse cx="24.300" cy="28" rx="4.600" ry="1.900" fill="#5d4136"/>
<ellipse cx="42.700" cy="28" rx="4.600" ry="1.900" fill="#5d4136"/>
<ellipse cx="23.500" cy="23.600" rx="6.500" ry="1.300" fill="#432719"/>
<ellipse cx="43.500" cy="23.600" rx="6.500" ry="1.300" fill="#432719"/>
<ellipse cx="32.800" cy="42.300" rx="9" ry="1.400" fill="#8b4f3c"/>
<ellipse cx="32.800" cy="48.300" rx="7" ry="1.200" fill="#8b4f3c"/>
<ellipse cx="32.800" cy="45.400" rx="7.400" ry="2.200" fill="#f0dfcc"/>
</g></g></svg>
<div style="position:absolute;left:2501.00px;top:942.90px;font-size:26.85px;line-height:32px;white-space:pre;">Mael Caldas <b>recorded</b></div>
<div style="position:absolute;left:2501.60px;top:986.93px;font-size:26.75px;line-height:32px;white-space:pre;"><span style="text-decoration:underline;text-decoration-thickness:1.6px;text-underline-offset:3.6px">a transaction</span> 09:57 AM</div>
<div class="anno" style="left:2400px;top:1036px;width:467px;height:92px"></div>
<svg style="position:absolute;left:2426px;top:1056.5px;" width="40" height="55" viewBox="0 0 40 55"><defs><linearGradient id="sg" x1="0" y1="0" x2="1" y2="1"><stop offset="0" stop-color="#52a46e"/><stop offset="1" stop-color="#449a62"/></linearGradient></defs><path fill="#4b9f68" d="M3 0H25L40 15V52a3 3 0 0 1-3 3H3a3 3 0 0 1-3-3V3a3 3 0 0 1 3-3z"/><path fill="#3d8857" opacity=".75" d="M26.5 14 40 26V15z"/><path fill="#9bceb1" d="M25 0 40 15H28a3 3 0 0 1-3-3z"/><path fill="#f3f3f3" fill-rule="evenodd" d="M10 27h20v18.6H10zM12.3 29.6v2.9h6.7v-2.9zM21 29.6v2.9h6.7v-2.9zM12.3 34.8v2.9h6.7v-2.9zM21 34.8v2.9h6.7v-2.9zM12.3 40v2.9h6.7v-2.9zM21 40v2.9h6.7v-2.9z"/></svg>
<div style="position:absolute;left:2496.20px;top:1066.75px;font-size:26.7px;line-height:32px;white-space:pre;">Via Google Sheets Add-on</div>
<svg style="position:absolute;left:2425.9px;top:1139.9px;" width="39" height="39" viewBox="0 0 24 24"><path fill="#808080" d="M2.01 21L23 12 2.01 3 2 10l15 2-15 2z"/></svg>
<div style="position:absolute;left:2496.20px;top:1138.28px;font-size:26.6px;line-height:32px;white-space:pre;color:#666"><b style="color:#585858">Date:</b></div>
<div style="position:absolute;left:2494.80px;top:1168.23px;font-size:26.6px;line-height:32px;white-space:pre;color:#666"> 08/25/2020</div>
<div style="position:absolute;left:2496.20px;top:1198.18px;font-size:26.6px;line-height:32px;white-space:pre;color:#666"><b style="color:#585858">Description:</b></div>
<div style="position:absolute;left:2494.80px;top:1228.13px;font-size:26.6px;line-height:32px;white-space:pre;color:#666"> Service Customer A Some</div>
</section>
</div></body></html>
